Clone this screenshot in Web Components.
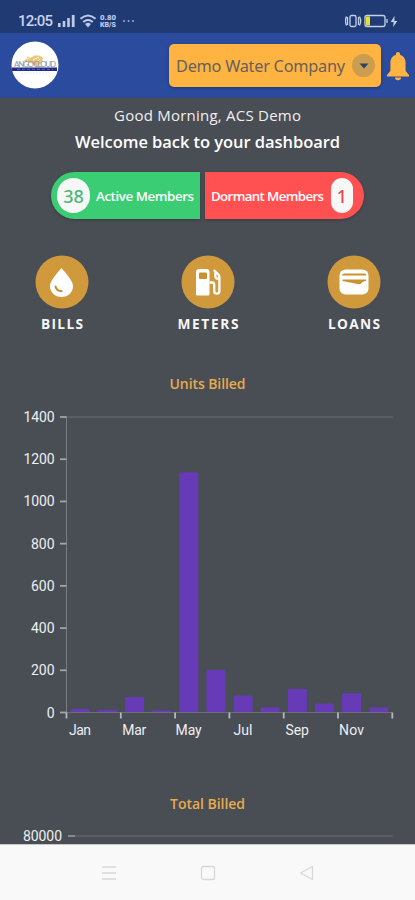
<!DOCTYPE html>
<html lang="en"><head><meta charset="utf-8"><meta name="viewport" content="width=device-width"><title>Dashboard</title>
<style>html,body{margin:0;height:100%;overflow:hidden;background:#494d54}</style></head>
<body><water-app></water-app>
<script>
const define=(name,html,init)=>customElements.define(name,class extends HTMLElement{
  constructor(){super();this.attachShadow({mode:'open'}).innerHTML=html;}
  connectedCallback(){if(init)init(this,this.shadowRoot);}
});

/* A line of text tracked so that it fills the width given by its "w" attribute. */
define('fit-text','<style>:host{display:block;white-space:nowrap;flex-shrink:0}span{display:inline-block}</style><span><slot></slot></span>',(el,r)=>{
  const s=r.querySelector('span'),n=el.textContent.length,w=+el.getAttribute('w');
  el.style.width=w+'px';
  const d=(w-s.getBoundingClientRect().width)/(n-1);
  s.style.letterSpacing=d+'px';s.style.marginRight=-d+'px';
});

define('status-bar',`<style>
:host{display:flex;box-sizing:border-box;height:33px;padding:10px 16px 0 18px;background:#203a74;color:#c9d4ec;font:500 15px/22px Roboto,sans-serif;align-items:flex-start}
svg{margin-left:4px;display:block}</style>
<fit-text w="35">12:05</fit-text>
<svg width="82" height="22" fill="#bccae8"><g><rect x="1" y="13" width="2.6" height="4"/><rect x="5.7" y="11" width="2.6" height="6"/><rect x="10.2" y="8" width="2.6" height="9"/><rect x="14.8" y="5" width="2.8" height="12"/></g>
<g fill="none" stroke="#bccae8" stroke-width="2"><path d="M23.5 8.7q7.5-6.5 15 0M26.2 12q4.800-4 9.600 0"/></g><path d="M28 14q3-2.500 6 0l-3 3.500z"/>
<g font-family="Roboto,sans-serif" font-weight="900" font-size="6.500"><text x="43" y="10" textLength="16" lengthAdjust="spacingAndGlyphs">0.80</text><text x="43" y="17.400" textLength="16" lengthAdjust="spacingAndGlyphs">KB/S</text></g>
<g fill="#9eb0d6"><circle cx="67" cy="11" r="1"/><circle cx="71.500" cy="11" r="1"/><circle cx="76" cy="11" r="1"/></g></svg>
<svg width="54" height="22" style="margin-left:auto" fill="none" stroke="#c4d0ea" stroke-width="1.300"><rect x="5" y="5.500" width="6" height="11" rx="1.500"/><path d="M2.500 7v8M13.500 7v8M1.500 6.500Q-.600 11 1.500 15.500M14.500 6.500q2.400 4.500 0 9"/><rect x="20" y="5.500" width="20" height="11" rx="2"/><path d="M42 9v4"/><rect x="21" y="6.500" width="4" height="9" fill="#e8e02e" stroke="none"/><path d="M49.500 6l-3.800 6h2.900l-.4 5 4.100-6h-2.900z" fill="#c4d0ea" stroke="none"/></svg>`);

define('company-logo',`<style>:host{display:block;width:48px;height:48px}svg{display:block;overflow:visible}</style><svg width="48" height="48"><circle cx="24" cy="24" r="23.500" fill="#fff"/><path d="M12.500 20l3-2 1-2.500 4 1 3-2h4.500l4 2-1 5-5 4-5-3-6-2z" fill="#eac777"/><path d="M16 18l4-2m2 3l6-3m-2 5l3-3" stroke="#fff6dc" fill="none"/><rect x="1" y="26.500" width="45" height="3.500" fill="#202b8b"/><path d="M6 28.300h36" stroke="#7181c6" stroke-width=".7" stroke-dasharray="3 2"/><path d="M10 32h28" stroke="#dce0e8" stroke-width=".7" stroke-dasharray="2 1"/><text x="3" y="26" font-family="Lato,sans-serif" font-size="8" fill="#8793a8" textLength="42">ANGO CLOUD</text></svg>`);

define('company-select',`<style>:host{display:flex;box-sizing:border-box;width:212px;height:43px;border-radius:5px;background:#ffb341;align-items:center;padding:0 6px 0 7px;justify-content:space-between;color:#66615f;font:16.300px/24px "Noto Sans",sans-serif;box-shadow:0 1px 3px #10265a88}
i{width:23px;height:23px;border-radius:50%;background:#ca9d51;display:grid;place-items:center}</style><slot></slot><i><svg width="10" height="6"><path d="M.5.500h9L5 5.500z" fill="#27446f"/></svg></i>`);

define('app-header',`<style>:host{display:flex;box-sizing:border-box;height:65px;background:#2b4b9e;padding:0 4px 0 11px;align-items:center;border-bottom:1px solid #344a85}
company-select{margin:1px 0 0 110px}svg{margin:2px 0 0 5px}</style>
<company-logo></company-logo><company-select><fit-text w="169">Demo Water Company</fit-text></company-select>
<svg width="24" height="30" fill="#ffb341"><path d="M12 1c-1.200 0-2 .9-2 2v.8C6.300 4.900 4.400 8 4.400 12v8L1 24v1.500h22V24l-3.400-4v-8c0-4-1.900-7.100-5.600-8.200V3c0-1.100-.8-2-2-2z"/><path d="M9 26.500h6a3 2.800 0 01-6 0z"/></svg>`);

define('member-pill',`<style>
:host{display:flex;box-sizing:border-box;height:47px;align-items:center;color:#fff;font:600 13.300px/20px "Open Sans",sans-serif;box-shadow:0 1px 3px #2226}
:host([kind=active]){width:149px;background:#3acd73;border-radius:24px 0 0 24px;padding-left:6px;gap:6px}
:host([kind=dormant]){width:159px;background:#ff5151;border-radius:0 24px 24px 0;padding-left:6px;gap:7px}
b{display:grid;place-items:center;height:35px;width:33px;border-radius:18px;background:#f7f7f7;color:#49ba77;font:500 18px/24px "Noto Sans",sans-serif}
:host([kind=dormant]) b{width:22px;color:#dc4b54}
</style><b></b><slot></slot>`,(el,r)=>{const b=r.querySelector('b');b.textContent=el.getAttribute('count');if(el.getAttribute('kind')==='dormant')r.append(b);});

const icons={
drop:'<path d="M26.500 13C22 18.500 15 25.500 15 31.300c0 6.200 5.100 10.700 11.500 10.700S38 37.500 38 31.300C38 25.500 31 18.500 26.500 13z" fill="#fff"/><path d="M20.500 31.500c.8 3 3 4.600 6.200 4.800" stroke="#c18a30" stroke-width="2" fill="none" stroke-linecap="round"/>',
pump:'<path d="M17.500 14h8a3 3 0 013 3v22q0 1.500-1.500 1.500h-10.500q-1.500 0-1.500-1.500V17a3 3 0 012.500-3z" fill="#fff"/><rect x="18" y="17.500" width="8" height="6.500" rx="1" fill="#c99231"/><path d="M28.500 27.500h2.500q2.200 0 2.200 2.200v6.300a2.600 2.600 0 005.200 0V22.500q0-2-1.400-3.400L32.800 15M34.300 17.500v3.500q0 2.800 3.500 2.800" stroke="#fff" stroke-width="2.300" fill="none"/>',
wallet:'<rect x="12.500" y="14.500" width="29" height="25" rx="6" fill="#fff"/><path d="M17 18.500h20.500q1.500 0 2 2H15q.5-2 2-2zM15.500 24.500h23.500v1.500l-3 .8-2.200 2q-.8.600-2 .4L15.500 26z" fill="#c99231"/>'};
define('menu-item',`<style>:host{display:flex;flex-direction:column;align-items:center;width:80px;gap:5px;color:#f6f6f6;font:700 13.700px/20px "Open Sans",sans-serif}svg{display:block}</style><svg width="54" height="54"></svg><slot></slot>`,(el,r)=>{r.querySelector('svg').innerHTML='<circle cx="27" cy="27" r="26.500" fill="#d09a3c"/>'+icons[el.getAttribute('icon')];});

define('bar-chart',`<style>:host{display:block;width:415px;flex-shrink:0}svg{display:block}text{font-family:Roboto,sans-serif;font-size:14px;fill:#edeff1}</style>`,(el,r)=>{
  const max=+el.getAttribute('max'),one=el.hasAttribute('clipped'),x0=one?74.500:66.500,h=295.500,y0=10;let s='';
  const line=(a,b,c,d,col,w=1)=>s+=`<line x1="${a}" y1="${b}" x2="${c}" y2="${d}" stroke="${col}" stroke-width="${w}"/>`;
  const label=(t,x,y,w,a='start')=>s+=`<text x="${x}" y="${y}" text-anchor="${a}" textLength="${w}">${t}</text>`;
  line(x0,y0,392.500,y0,'#5f6367',1.500);
  if(one){line(68,y0,75,y0,'#9b9fa4',1.500);label(max,62,y0+5,39,'end');}
  else{
    line(x0,y0,x0,y0+h,'#797d81');
    for(let i=0;i<8;i++){const y=y0+h*i/7,v=max-200*i;line(60,y,66.500,y,'#a2a5a9',1.800);label(v,54.500,y+5,v>999?31:v?23.500:8,'end');}
    const tops=[709,709.7,697,710.2,472.300,670,695.500,707.600,689,703.500,693.300,707.600];
    tops.forEach((t,i)=>s+=`<path d="M${70.800+27.130*i} 305.500V${t-406}q0-1 1-1h17q1 0 1 1V305.500z" fill="#673ab7"/>`);
    line(x0,y0+h,392.500,y0+h,'#6f6c7a');
    for(let i=0;i<7;i++)line(66.500+54.300*i,y0+h,66.500+54.300*i,y0+h+6,'#b5b7ba',1.800);
    ['Jan','Mar','May','Jul','Sep','Nov'].forEach((m,i)=>label(m,80+54.300*i,328,[22,24,26,19,23.500,25][i],'middle'));
  }
  const box=document.createElement('div');box.innerHTML=`<svg width="415" height="${one?27:335}">${s}</svg>`;r.append(box.firstChild);
});

define('nav-bar',`<style>:host{display:flex;box-sizing:border-box;height:56px;background:#f9f9f9;border-top:1px solid #c7c8c9;justify-content:space-between;padding:19px 100px 0 101px}svg{fill:none;stroke:#d8d8d8;stroke-width:1.300}</style>
<svg width="16" height="18"><path d="M1 3h14M1 9h14M1 15h14"/></svg><svg width="16" height="18"><rect x="1.500" y="2.500" width="13" height="13" rx="2"/></svg><svg width="16" height="18"><path d="M13.500 2.500v13L1.500 9z" stroke-linejoin="round"/></svg>`);

define('water-app',`<style>
:host{display:flex;flex-direction:column;width:415px;height:900px;background:#494d54;color:#fff;overflow:hidden}
main{display:flex;flex-direction:column;align-items:center;flex:1;min-height:0;overflow:hidden}
.hi{font:15px/20px "Open Sans",sans-serif;color:#f0f0f0;margin-top:7px}.wel{font:600 16.500px/24px "Open Sans",sans-serif;margin-top:5px}
.pills{display:flex;gap:5px;margin:18px 0 36px;flex-shrink:0}
.menu{display:flex;justify-content:space-between;box-sizing:border-box;width:415px;padding:0 21px 0 22px;flex-shrink:0}
.title{font:600 14px/20px "Open Sans",sans-serif;color:#e6ab4d}
.t1{margin-top:40px}.t2{margin-top:52px}
bar-chart{margin-top:13px}.last{margin-top:12px}
</style><status-bar></status-bar><app-header></app-header>
<main><fit-text class="hi" w="187">Good Morning, ACS Demo</fit-text><fit-text class="wel" w="265">Welcome back to your dashboard</fit-text>
<div class="pills"><member-pill kind="active" count="38"><fit-text w="98">Active Members</fit-text></member-pill><member-pill kind="dormant" count="1"><fit-text w="113">Dormant Members</fit-text></member-pill></div>
<div class="menu"><menu-item icon="drop"><fit-text w="42">BILLS</fit-text></menu-item><menu-item icon="pump"><fit-text w="61">METERS</fit-text></menu-item><menu-item icon="wallet"><fit-text w="52">LOANS</fit-text></menu-item></div>
<fit-text class="title t1" w="76">Units Billed</fit-text><bar-chart max="1400"></bar-chart>
<fit-text class="title t2" w="75">Total Billed</fit-text><bar-chart class="last" max="80000" clipped></bar-chart></main>
<nav-bar></nav-bar>`);
</script></body></html>
